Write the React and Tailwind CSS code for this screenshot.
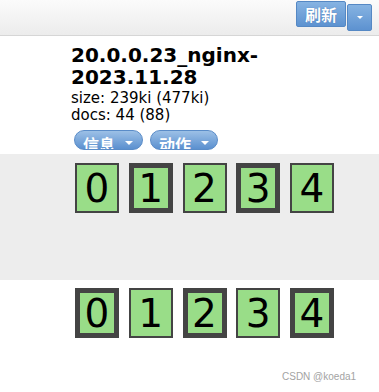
import React from "react";

const thin = "border-[2px]";
const thick = "border-[5px]";

function Box({ n, t }) {
  return (
    <div
      className={`box-border w-[44px] h-[50px] ${t ? thick : thin} border-[#444444] bg-[#99dd88] flex items-center justify-center text-[39px] leading-none text-black`}
      style={{ fontFamily: '"DejaVu Sans", sans-serif' }}
    >
      {n}
    </div>
  );
}

function Pill({ label, w }) {
  return (
    <div
      className={`box-border h-[20px] ${w} overflow-hidden rounded-full border border-[#5a8cc8] bg-gradient-to-b from-[#9cc0e6] to-[#5b90cf] flex items-start pl-[8px]`}
    >
      <span
        className="mt-[5px] text-[16px] leading-[16px] font-bold text-white"
        style={{ fontFamily: '"Noto Sans CJK SC", sans-serif' }}
      >
        {label}
      </span>
      <span className="ml-[10px] mt-[10px] w-0 h-0 border-l-[4px] border-r-[4px] border-t-[4px] border-l-transparent border-r-transparent border-t-white" />
    </div>
  );
}

export default function App() {
  return (
    <div
      className="relative w-[379px] h-[392px] bg-white overflow-hidden"
      style={{ fontFamily: '"DejaVu Sans", sans-serif' }}
    >
      <div className="box-border h-[36px] border-b border-[#d6d6d6] bg-gradient-to-b from-[#fbfbfb] to-[#ececec] flex justify-end items-start pr-[7px]">
        <div
          className="box-border mt-[1px] w-[50px] h-[26px] rounded-[2px] border border-[#5588c4] bg-gradient-to-b from-[#86b3e2] to-[#5d92d0] flex items-center justify-center text-[16px] font-bold text-white"
          style={{ fontFamily: '"Noto Sans CJK SC", sans-serif', textShadow: "0 0 1px #3a6aa8" }}
        >
          刷新
        </div>
        <div className="box-border mt-[4px] ml-[1px] w-[25px] h-[27px] rounded-[2px] border border-[#5588c4] bg-gradient-to-b from-[#86b3e2] to-[#5d92d0] flex items-center justify-center">
          <span className="w-0 h-0 border-l-[3px] border-r-[3px] border-t-[3px] border-l-transparent border-r-transparent border-t-white" />
        </div>
      </div>

      <div className="pl-[71px] pt-[8px]">
        <div className="text-[20px] leading-[22px] font-bold text-black">
          20.0.0.23_nginx-
          <br />
          2023.11.28
        </div>
        <div className="mt-[2px] text-[15px] leading-[17px] text-black">
          size: 239ki (477ki)
        </div>
        <div className="text-[15px] leading-[17px] text-black">docs: 44 (88)</div>
        <div className="mt-[6px] ml-[3px] flex gap-[7px]">
          <Pill label="信息" w="w-[69px]" />
          <Pill label="动作" w="w-[68px]" />
        </div>
      </div>

      <div className="mt-[4px] h-[126px] bg-[#ededed] pt-[9px] pl-[75px] flex gap-[9.75px] items-start">
        <Box n="0" t={false} />
        <Box n="1" t={true} />
        <Box n="2" t={false} />
        <Box n="3" t={true} />
        <Box n="4" t={false} />
      </div>

      <div className="pt-[8px] pl-[75px] flex gap-[9.75px] items-start">
        <Box n="0" t={true} />
        <Box n="1" t={false} />
        <Box n="2" t={true} />
        <Box n="3" t={false} />
        <Box n="4" t={true} />
      </div>

      <div
        className="absolute left-[282px] top-[371px] text-[10px] leading-[12px] text-[#a3a3a3]"
        style={{ fontFamily: '"Liberation Sans", sans-serif' }}
      >
        CSDN @koeda1
      </div>
    </div>
  );
}
